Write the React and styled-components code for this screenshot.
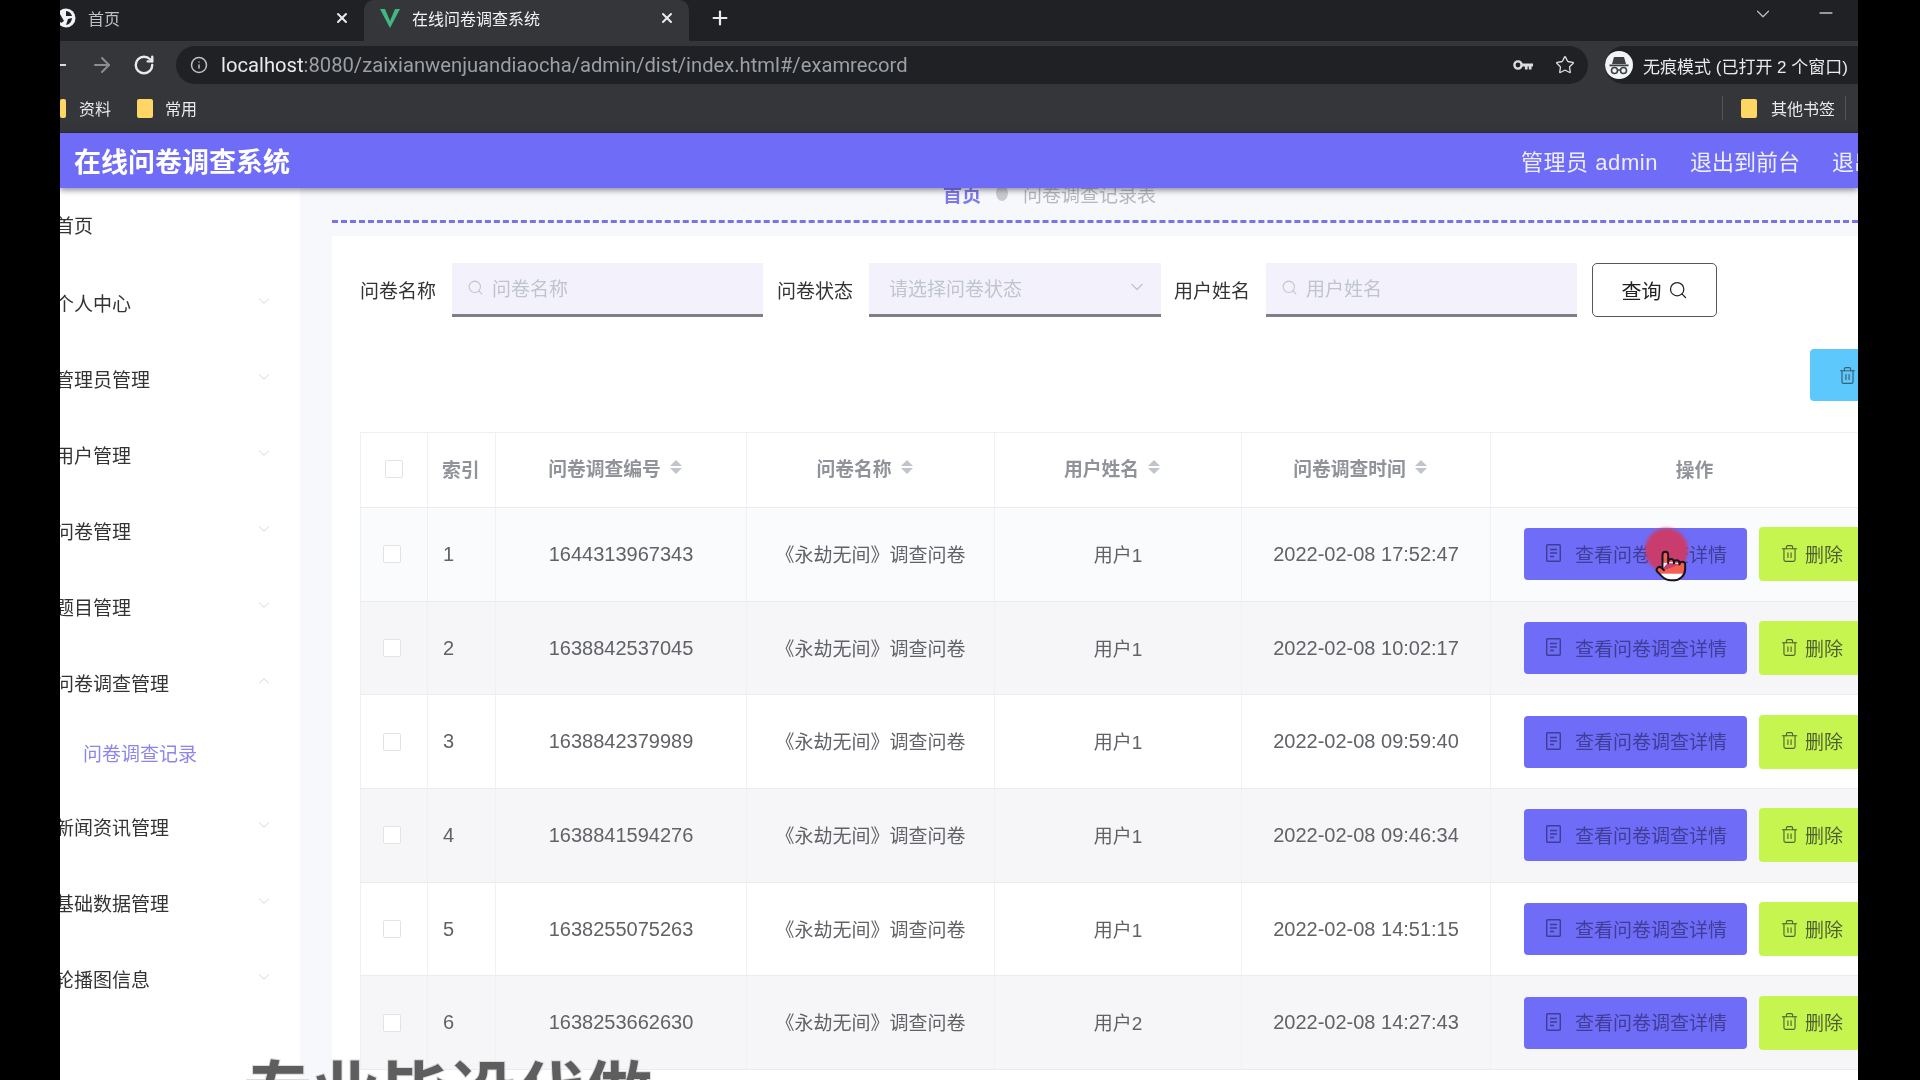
import React from 'react';
import styled, { createGlobalStyle } from 'styled-components';
import { ArrowRight, RotateCw, Info, Star, Search, ChevronDown, ChevronUp, Trash2, Plus, X, Minus, Pointer } from 'lucide-react';

const Global = createGlobalStyle`
  html, body { margin: 0; padding: 0; background: #000; }
  * { box-sizing: border-box; }
  body { font-family: "Liberation Sans", "Noto Sans CJK SC", sans-serif; }
`;

const Stage = styled.div`
  width: 1920px; height: 1080px; background: #000; overflow: hidden; position: relative;
  padding: 0 62px 0 60px;
`;
const Frame = styled.div`
  width: 100%; height: 100%; background: #fff; overflow: hidden; position: relative;
  display: flex; flex-direction: column; filter: blur(0.45px);
`;
const TabStrip = styled.div`
  height: 41px; flex: none; background: #202124; display: flex; align-items: stretch; color: #dfe1e5; font-size: 16px;
`;
const Tab = styled.div`
  width: ${p => p.$w}px; flex: none; display: flex; align-items: center; position: relative; padding: 0 0 6px ${p => p.$pad}px;
  background: ${p => (p.$active ? '#35363a' : 'transparent')};
  border-radius: ${p => (p.$active ? '10px 10px 0 0' : '0')};
  color: ${p => (p.$active ? '#f1f3f4' : '#bdc1c6')};
`;
const TabTitle = styled.span` flex: 1; margin-left: ${p => p.$gap}px; `;
const TabClose = styled.span` display: flex; margin-right: ${p => p.$right}px; color: #e8eaed; `;
const NewTab = styled.span` display: flex; align-items: center; margin-left: 20px; padding-bottom: 6px; color: #e8eaed; `;
const WindowCtl = styled.div` margin-left: auto; display: flex; align-items: flex-start; gap: 42px; padding: 3px 22px 0 0; color: #bdc1c6; `;
const FaviconGlobe = styled.svg` margin-left: -4px; flex: none; `;

const ToolBar = styled.div`
  height: 43px; flex: none; background: #35363a; display: flex; align-items: flex-end; color: #e8eaed; position: relative;
`;
const NavIcons = styled.div` width: 116px; height: 38px; flex: none; display: flex; align-items: center; padding-left: 0; gap: 19px; `;
const BackStub = styled.span` display: block; width: 6px; height: 2px; background: #dadce0; margin-right: 5px; `;
const AddressBar = styled.div`
  width: 1412px; height: 38px; flex: none; background: #202124; border-radius: 19px; display: flex; align-items: center;
  padding: 0 13px 0 14px; font-family: "Roboto", "Liberation Sans", sans-serif; font-size: 20.2px; color: #9aa0a6;
`;
const UrlHost = styled.span` color: #e8eaed; margin-left: 13px; `;
const BarIcons = styled.div` margin-left: auto; display: flex; align-items: center; gap: 22px; color: #dadce0; `;
const Incognito = styled.div`
  margin-left: 17px; flex: 1; height: 38px; background: #202124; border-radius: 19px 0 0 19px; display: flex; align-items: center;
  color: #e8eaed; font-size: 17px; white-space: nowrap; gap: 10px; overflow: hidden;
`;

const BookmarkBar = styled.div`
  height: 49px; flex: none; background: #35363a; display: flex; align-items: center; color: #e8eaed; font-size: 16px;
  border-bottom: 1px solid #2a2a2e;
`;
const Mark = styled.span` display: flex; align-items: center; gap: 9px; margin-left: ${p => p.$left}px; white-space: nowrap; `;
const FolderChip = styled.span`
  display: block; width: ${p => p.$w || 16}px; height: 19px; background: #fdd663; border-radius: 2px; margin-left: ${p => p.$ml || 0}px;
`;
const BarRule = styled.span` width: 1px; height: 24px; background: #55565a; margin-left: ${p => p.$left}px; flex: none; `;

const AdminHeader = styled.header`
  height: 55px; flex: none; background: #6f6cf7; color: #fff; display: flex; align-items: center; position: relative; z-index: 3;
  box-shadow: 0 2px 6px rgba(40, 40, 60, .55); white-space: nowrap;
`;
const Brand = styled.div`
  flex: 0 0 1461px; padding-left: 14px; font-size: 27px; font-weight: 700;
`;
const HeaderLinks = styled.div` display: flex; gap: 32px; font-size: 22px; color: #eeeeff; margin-top: -2px; `;
const AdminName = styled.span` letter-spacing: .55px; `;

const Body = styled.div` flex: 1; display: flex; min-height: 0; background: #f7f8fb; `;
const Sidebar = styled.nav`
  width: 240px; flex: none; background: #fff; margin-top: -1px; color: #333; font-size: 19px;
`;
const MenuItem = styled.div`
  height: ${p => p.$h || 76}px; margin-bottom: ${p => p.$mb || 0}px; display: flex; align-items: center; margin-left: -5px;
  padding-right: 27px; justify-content: space-between; white-space: nowrap;
`;
const MenuChevron = styled.span` display: flex; color: #dcdde2; margin-top: -3px; `;
const SubItem = styled.div`
  height: 64px; margin-bottom: 4px; display: flex; align-items: center; padding-left: 23px; color: #8d85ee; white-space: nowrap;
`;

const Main = styled.main` flex: 1; padding: 0 0 0 32px; min-width: 0; overflow: hidden; `;
const Crumbs = styled.div`
  height: 22px; margin-top: -6px; padding-left: 611px; display: flex; align-items: center; font-size: 19px; color: #b5b7bd; white-space: nowrap;
`;
const CrumbHome = styled.span` color: #7d78ee; font-weight: 700; `;
const CrumbSep = styled.span` width: 12px; height: 16px; margin: 0 15px 0 15px; border-radius: 50%; background: #c9cad0; `;
const Dashes = styled.div` margin-top: 16px; border-top: 3px dashed #7a72ea; `;
const Card = styled.section`
  margin-top: 13px; width: 1600px; height: 900px; background: #fff; padding: 27px 0 0 28px;
`;
const SearchRow = styled.div` display: flex; align-items: stretch; height: 54px; `;
const FieldLabel = styled.label`
  display: flex; align-items: center; font-size: 19px; color: #333; margin-left: ${p => p.$left || 0}px; width: 76px; flex: none; white-space: nowrap;
  padding-bottom: 2px;
`;
const Input = styled.div`
  width: ${p => p.$w}px; flex: none; margin-left: 16px; background: #f3f2fc; border-bottom: 3px solid #7f7f87; display: flex; align-items: center;
  padding: 0 0 3px ${p => p.$pad || 15}px; color: #c0c4cc; font-size: 19px; gap: 8px; white-space: nowrap;
`;
const SelectArrow = styled.span` margin-left: auto; display: flex; margin-right: 14px; color: #c0c4cc; `;
const QueryButton = styled.button`
  width: 125px; margin-left: 15px; border: 1px solid #55565c; border-radius: 5px; background: #fff; color: #222; font: inherit; font-size: 20px;
  display: flex; align-items: center; justify-content: center; gap: 6px; padding: 0;
`;
const ActionRow = styled.div` margin-top: 32px; height: 51px; padding-left: 1450px; `;
const BulkDelete = styled.button`
  width: 120px; height: 52px; background: #5cc8fb; border: none; border-radius: 4px; color: #3f5f78; display: flex; align-items: center; padding: 0 0 0 28px;
`;
const Table = styled.table`
  margin-top: 32px; border-collapse: collapse; table-layout: fixed; width: 1538px; border-top: 1px solid #eff0f3; border-left: 1px solid #eff0f3;
  font-size: 20px; color: #606266;
`;
const Th = styled.th`
  height: 75px; font-weight: 600; font-size: 18.8px; color: #909399; border-right: 1px solid #f0f1f4; border-bottom: 1px solid #ebecef; text-align: ${p => p.$align || 'center'};
  padding: 0 0 3px ${p => p.$pad || 0}px; background: #fff;
`;
const SortTh = styled(Th)` padding: 0 12px 6px 0; `;
const HeadInner = styled.span` display: inline-flex; align-items: center; gap: 9px; vertical-align: middle; `;
const SortCaret = styled.span`
  display: inline-flex; flex-direction: column; gap: 2px;
  &::before, &::after { content: ""; width: 0; height: 0; border-left: 6px solid transparent; border-right: 6px solid transparent; }
  &::before { border-bottom: 6px solid #c0c4cc; }
  &::after { border-top: 6px solid #c0c4cc; }
`;
const Tr = styled.tr` background: ${p => p.$bg}; `;
const Td = styled.td`
  height: 93.7px; padding: 0 0 ${p => p.$lift || 0}px ${p => p.$pad || 0}px; border-right: 1px solid #f0f1f4; border-bottom: 1px solid #ebecef; text-align: ${p => p.$align || 'center'};
  white-space: nowrap; font-size: ${p => p.$size || 20}px;
`;
const CheckBox = styled.span`
  display: block; width: 18px; height: 18px; background: #fff; border: 1px solid #e2e3e8; border-radius: 2px; margin-left: ${p => p.$left}px;
`;
const Actions = styled.div` display: flex; align-items: center; gap: 12px; padding-left: 33px; `;
const ViewButton = styled.button`
  width: 223px; height: 52px; flex: none; border: none; border-radius: 4px; background: #6f6cf7; color: #3f3d95; font: inherit; font-size: 19px;
  display: flex; align-items: center; gap: 14px; padding: 0 0 2px 22px;
`;
const DeleteButton = styled.button`
  width: 120px; height: 54px; flex: none; border: none; border-radius: 4px; background: #c6f550; color: #4f6030; font: inherit; font-size: 19px;
  display: flex; align-items: center; gap: 6px; padding: 0 0 2px 21px;
`;
const ClickDot = styled.span`
  position: absolute; left: 1585px; top: 528px; width: 43px; height: 44px; border-radius: 50%; background: #c93d6e; z-index: 1; filter: blur(1.5px);
`;
const Cursor = styled.span`
  position: absolute; left: 1594px; top: 549px; z-index: 2; display: flex; color: #1a1420;
`;
const Caption = styled.div`
  position: absolute; left: 184px; top: 1048px; z-index: 4; font-size: 68px; line-height: 1.2; font-weight: 700; color: #5e5e5e; white-space: nowrap;
  font-family: "Noto Sans CJK SC", sans-serif; -webkit-text-stroke: 2px #dcdcdc; paint-order: stroke fill;
`;

const menu = ['个人中心', '管理员管理', '用户管理', '问卷管理', '题目管理'];
const menu2 = ['新闻资讯管理', '基础数据管理', '轮播图信息'];
const rows = [
  ['1', '1644313967343', '用户1', '2022-02-08 17:52:47', '#fafbfc'],
  ['2', '1638842537045', '用户1', '2022-02-08 10:02:17', '#f6f6f8'],
  ['3', '1638842379989', '用户1', '2022-02-08 09:59:40', '#ffffff'],
  ['4', '1638841594276', '用户1', '2022-02-08 09:46:34', '#f6f6f8'],
  ['5', '1638255075263', '用户1', '2022-02-08 14:51:15', '#ffffff'],
  ['6', '1638253662630', '用户2', '2022-02-08 14:27:43', '#f6f6f8'],
];

const Globe = () => (
  <FaviconGlobe width="20" height="20" viewBox="0 0 20 20">
    <circle cx="10" cy="10" r="9.5" fill="#f1f3f4" />
    <path d="M10 3 A7 7 0 0 1 16 8 L10 8 Z M4 6 L8 13 L5 15 A7 7 0 0 1 4 6 Z M12 11 L16 10 A7 7 0 0 1 10 17 Z" fill="#202124" />
  </FaviconGlobe>
);
const VueMark = () => (
  <svg width="20" height="20" viewBox="0 0 20 20" style={{ flex: 'none' }}>
    <path d="M0 1 L5 1 L10 13 L15 1 L20 1 L10 20 Z" fill="#41b883" />
  </svg>
);
const Spy = () => (
  <svg width="28" height="28" viewBox="0 0 28 28" style={{ flex: 'none' }}>
    <circle cx="14" cy="14" r="14" fill="#f1f3f4" />
    <path d="M9 6 H19 L21 13 H7 Z" fill="#3c4043" />
    <rect x="4.5" y="13.5" width="19" height="1.8" fill="#3c4043" />
    <circle cx="9.5" cy="19.5" r="3" fill="none" stroke="#3c4043" strokeWidth="1.6" />
    <circle cx="18.5" cy="19.5" r="3" fill="none" stroke="#3c4043" strokeWidth="1.6" />
    <path d="M12.5 19 H15.5" stroke="#3c4043" strokeWidth="1.4" />
  </svg>
);
const KeyMark = () => (
  <svg width="20" height="12" viewBox="0 0 20 12" fill="none">
    <circle cx="5" cy="6" r="3.6" stroke="#dadce0" strokeWidth="2.4" />
    <path d="M9 4.6 H20 V7.4 H18.5 V10.5 H15.8 V7.4 H14.6 V10.5 H11.9 V7.4 H9 Z" fill="#dadce0" />
  </svg>
);
const TicketMark = () => (
  <svg width="15" height="18" viewBox="0 0 15 18" fill="none" stroke="currentColor" strokeWidth="1.4" style={{ flex: 'none' }}>
    <rect x=".7" y=".7" width="13.6" height="16.6" rx="1" />
    <path d="M4 5.5 H11 M4 9 H11 M4 12.5 H8" />
  </svg>
);
const HandGradient = () => (
  <svg width="0" height="0" style={{ position: 'absolute' }}>
    <defs>
      <linearGradient id="handFill" x1="0" y1="0" x2="0" y2="1">
        <stop offset="0" stopColor="#f2604f" />
        <stop offset=".62" stopColor="#f2604f" />
        <stop offset=".68" stopColor="#ffffff" />
        <stop offset="1" stopColor="#ffffff" />
      </linearGradient>
    </defs>
  </svg>
);

const SortHead = ({ children }) => (
  <SortTh><HeadInner>{children}<SortCaret /></HeadInner></SortTh>
);

export default function App() {
  return (
    <Stage>
      <Global />
      <Frame>
        <TabStrip>
          <Tab $w={304} $pad={0}>
            <Globe />
            <TabTitle $gap={12}>首页</TabTitle>
            <TabClose $right={14}><X size={16} strokeWidth={3} /></TabClose>
          </Tab>
          <Tab $w={325} $active $pad={16}>
            <VueMark />
            <TabTitle $gap={12}>在线问卷调查系统</TabTitle>
            <TabClose $right={14}><X size={16} strokeWidth={3} /></TabClose>
          </Tab>
          <NewTab><Plus size={22} strokeWidth={2.4} /></NewTab>
          <WindowCtl>
            <ChevronDown size={22} strokeWidth={1.3} />
            <Minus size={20} strokeWidth={2} />
          </WindowCtl>
        </TabStrip>

        <ToolBar>
          <NavIcons>
            <BackStub />
            <ArrowRight size={24} color="#8b8d91" />
            <RotateCw size={22} strokeWidth={2.6} />
          </NavIcons>
          <AddressBar>
            <Info size={18} color="#bdc1c6" />
            <UrlHost>localhost</UrlHost>:8080/zaixianwenjuandiaocha/admin/dist/index.html#/examrecord
            <BarIcons>
              <KeyMark />
              <Star size={20} strokeWidth={1.6} />
            </BarIcons>
          </AddressBar>
          <Incognito><Spy />无痕模式 (已打开 2 个窗口)</Incognito>
        </ToolBar>

        <BookmarkBar>
          <FolderChip $w={6} />
          <Mark $left={13}>资料</Mark>
          <FolderChip $ml={26} />
          <Mark $left={12}>常用</Mark>
          <BarRule $left={1525} />
          <FolderChip $ml={18} />
          <Mark $left={14}>其他书签</Mark>
          <BarRule $left={10} />
        </BookmarkBar>

        <AdminHeader>
          <Brand>在线问卷调查系统</Brand>
          <HeaderLinks>
            <AdminName>管理员 admin</AdminName>
            <span>退出到前台</span>
            <span>退出登录</span>
          </HeaderLinks>
        </AdminHeader>

        <Body>
          <Sidebar>
            <MenuItem $h={75} $mb={2}>首页</MenuItem>
            {menu.map(t => (
              <MenuItem key={t}>{t}<MenuChevron><ChevronDown size={18} strokeWidth={1.4} /></MenuChevron></MenuItem>
            ))}
            <MenuItem>问卷调查管理<MenuChevron><ChevronUp size={18} strokeWidth={1.4} /></MenuChevron></MenuItem>
            <SubItem>问卷调查记录</SubItem>
            {menu2.map(t => (
              <MenuItem key={t}>{t}<MenuChevron><ChevronDown size={18} strokeWidth={1.4} /></MenuChevron></MenuItem>
            ))}
          </Sidebar>
          <Main>
            <Crumbs><CrumbHome>首页</CrumbHome><CrumbSep />问卷调查记录表</Crumbs>
            <Dashes />
            <Card>
              <SearchRow>
                <FieldLabel>问卷名称</FieldLabel>
                <Input $w={311}><Search size={17} strokeWidth={1.5} />问卷名称</Input>
                <FieldLabel $left={14}>问卷状态</FieldLabel>
                <Input $w={292} $pad={20}>请选择问卷状态<SelectArrow><ChevronDown size={20} strokeWidth={1.5} /></SelectArrow></Input>
                <FieldLabel $left={13}>用户姓名</FieldLabel>
                <Input $w={311}><Search size={17} strokeWidth={1.5} />用户姓名</Input>
                <QueryButton>查询<Search size={20} strokeWidth={1.5} /></QueryButton>
              </SearchRow>
              <ActionRow><BulkDelete><Trash2 size={19} strokeWidth={1.5} /></BulkDelete></ActionRow>
              <Table>
                <colgroup>
                  <col width="67" /><col width="68" /><col width="251" /><col width="248" /><col width="247" /><col width="249" /><col width="408" />
                </colgroup>
                <thead>
                  <tr>
                    <Th $align="left" $pad={24}><CheckBox $left={0} /></Th>
                    <Th $align="left" $pad={14}>索引</Th>
                    <SortHead>问卷调查编号</SortHead>
                    <SortHead>问卷名称</SortHead>
                    <SortHead>用户姓名</SortHead>
                    <SortHead>问卷调查时间</SortHead>
                    <Th>操作</Th>
                  </tr>
                </thead>
                <tbody>
                  {rows.map(r => (
                    <Tr key={r[0]} $bg={r[4]}>
                      <Td $align="left" $pad={22}><CheckBox $left={0} /></Td>
                      <Td $align="left" $pad={15}>{r[0]}</Td>
                      <Td>{r[1]}</Td>
                      <Td $size={19} $lift={2}>《永劫无间》调查问卷</Td>
                      <Td $size={19} $lift={2}>{r[2]}</Td>
                      <Td>{r[3]}</Td>
                      <Td $align="left">
                        <Actions>
                          <ViewButton><TicketMark />查看问卷调查详情</ViewButton>
                          <DeleteButton><Trash2 size={19} strokeWidth={1.4} />删除</DeleteButton>
                        </Actions>
                      </Td>
                    </Tr>
                  ))}
                </tbody>
              </Table>
            </Card>
          </Main>
        </Body>
        <HandGradient />
        <ClickDot />
        <Cursor><Pointer size={34} fill="url(#handFill)" strokeWidth={1.4} /></Cursor>
        <Caption>专业毕设代做</Caption>
      </Frame>
    </Stage>
  );
}
